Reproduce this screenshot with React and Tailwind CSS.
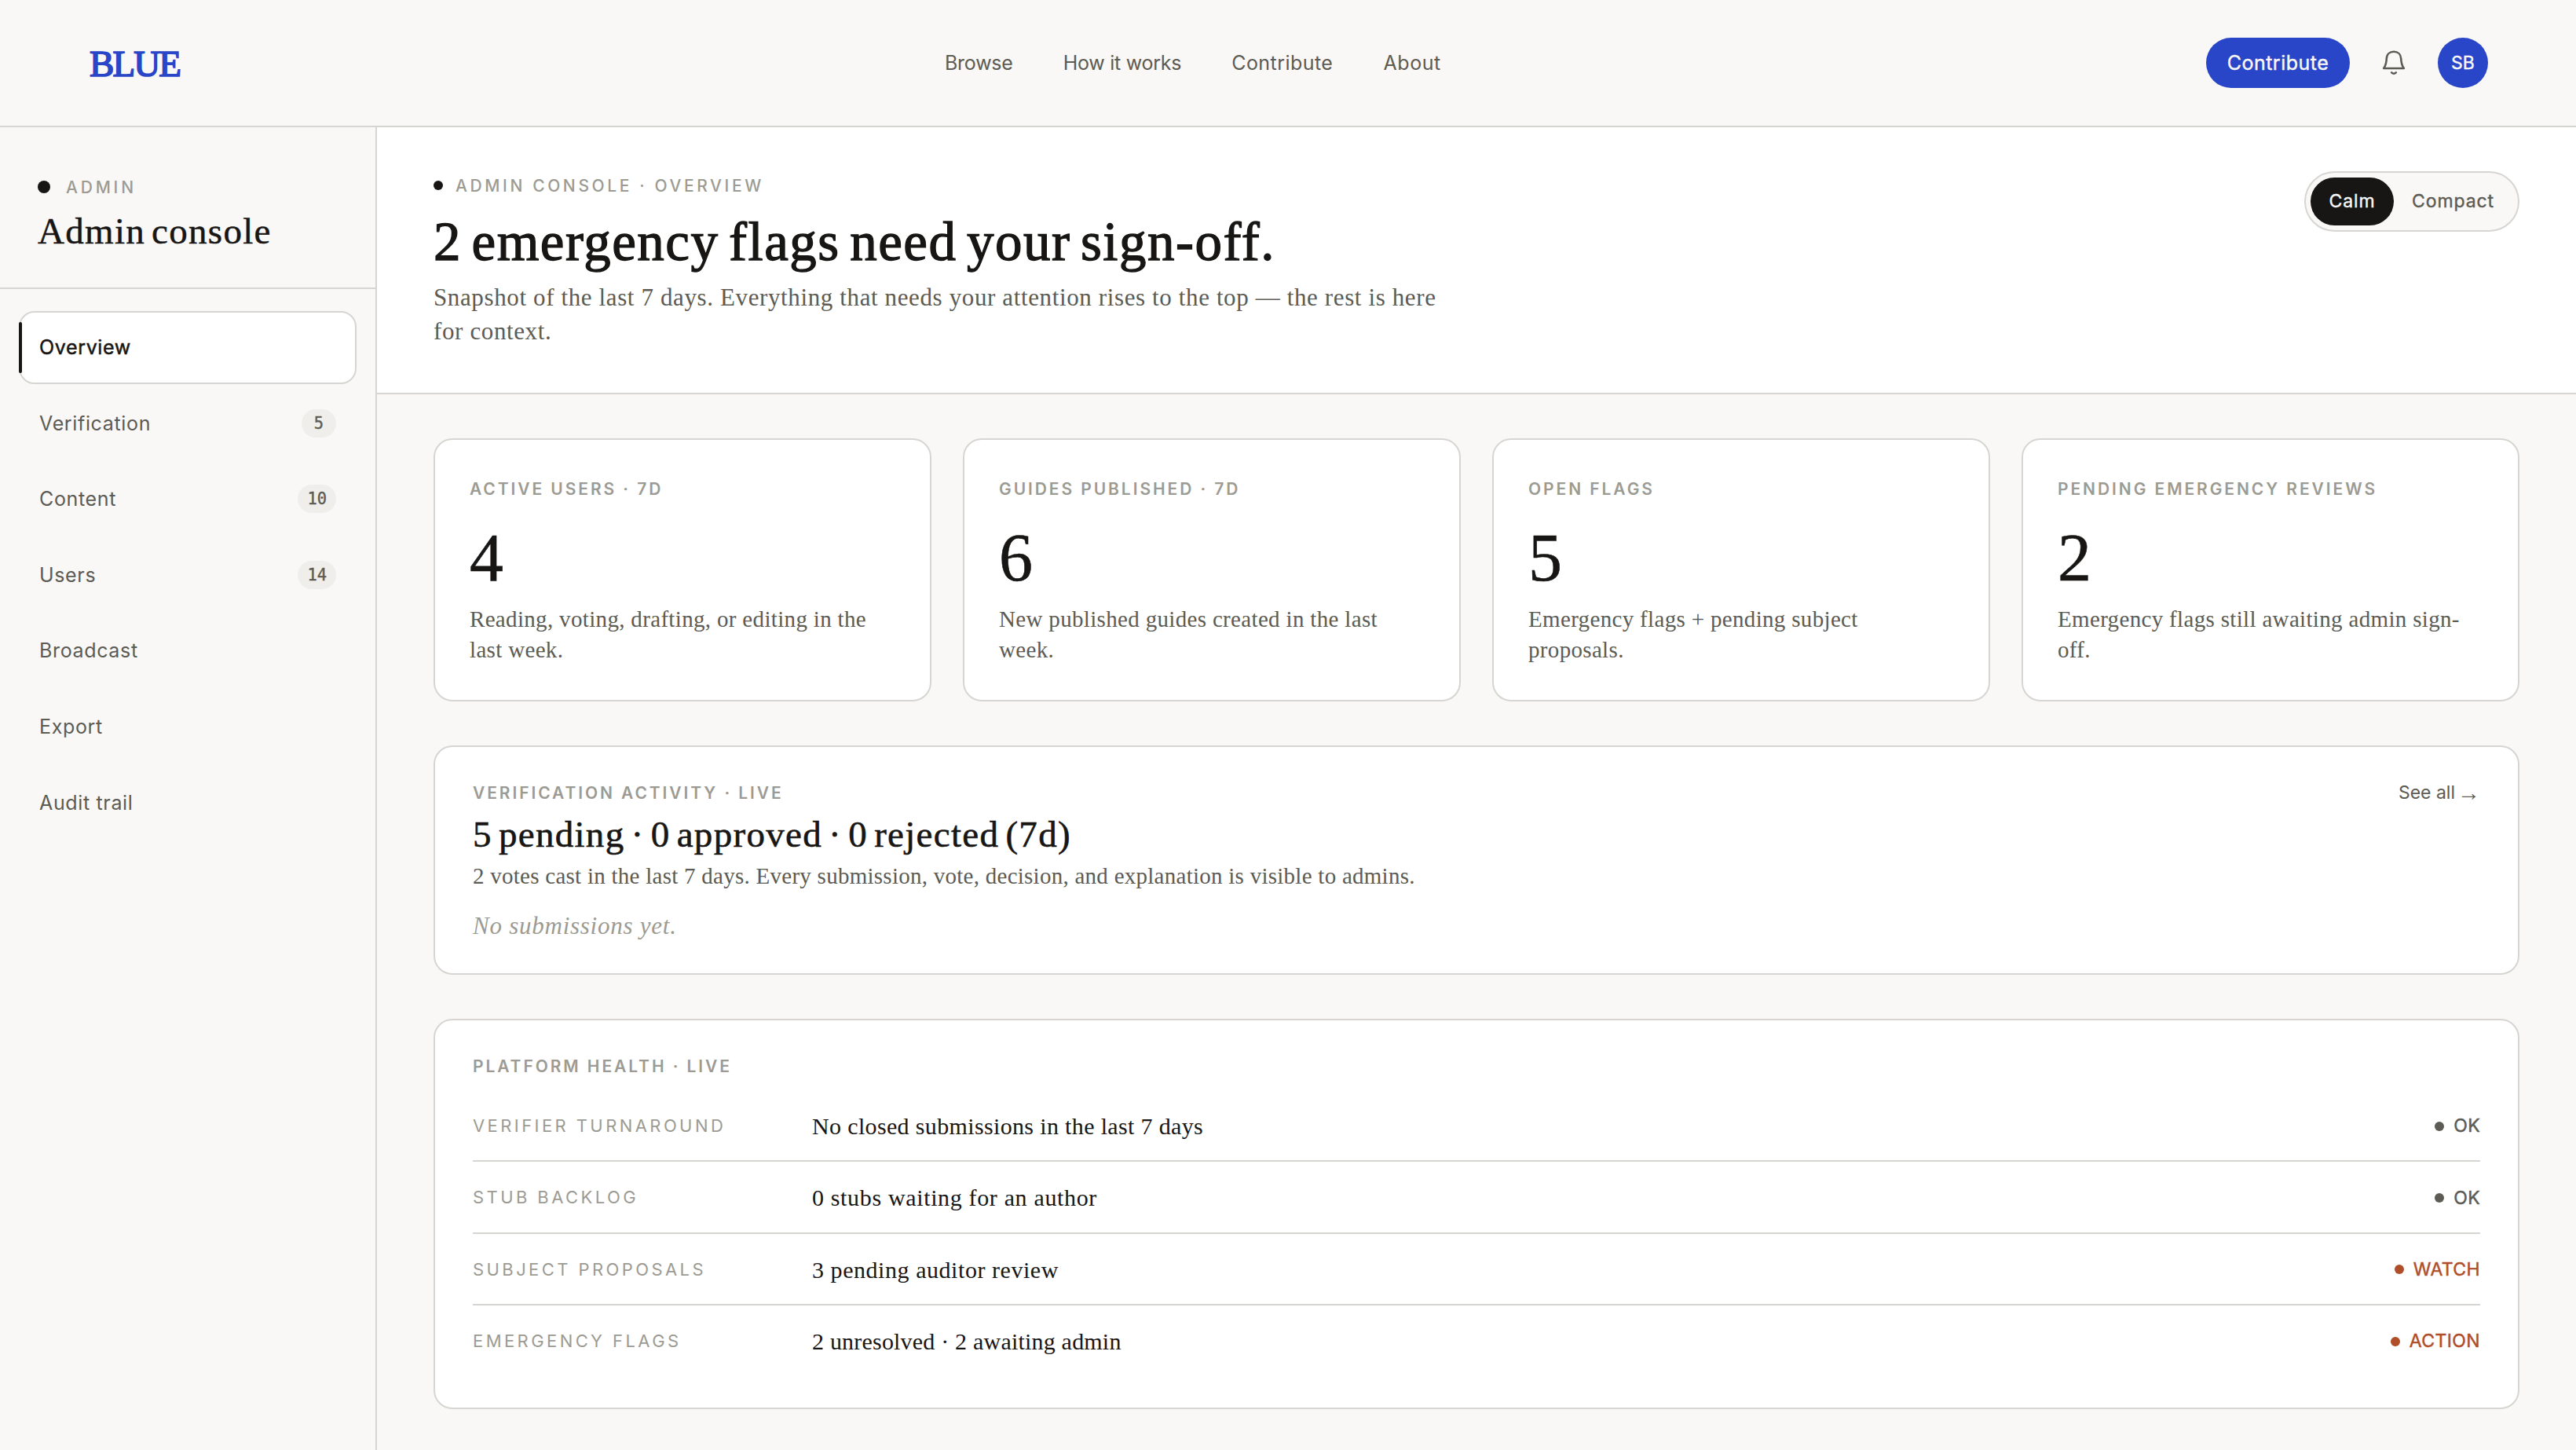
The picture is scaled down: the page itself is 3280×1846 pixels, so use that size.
import React, { useState } from 'react';
import clsx from 'clsx';

const NAV_LINKS = [
    { label: 'Browse', className: 'tracking-[-0.25px]' },
    { label: 'How it works', className: 'tracking-[-0.25px]' },
    { label: 'Contribute', className: 'tracking-[0.45px]' },
    { label: 'About', className: 'tracking-[0.6px]' }
];

const SECTIONS = [
    { id: 'overview', label: 'Overview' },
    { id: 'verification', label: 'Verification', count: 5 },
    { id: 'content', label: 'Content', count: 10 },
    { id: 'users', label: 'Users', count: 14 },
    { id: 'broadcast', label: 'Broadcast' },
    { id: 'export', label: 'Export' },
    { id: 'audit', label: 'Audit trail' }
];

const STATS = [
    { label: 'Active users · 7d', value: 4, note: 'Reading, voting, drafting, or editing in the last week.' },
    { label: 'Guides published · 7d', value: 6, note: 'New published guides created in the last week.' },
    { label: 'Open flags', value: 5, note: 'Emergency flags + pending subject proposals.' },
    { label: 'Pending emergency reviews', value: 2, note: 'Emergency flags still awaiting admin sign-off.' }
];

const HEALTH = [
    { label: 'Verifier turnaround', value: 'No closed submissions in the last 7 days', status: 'OK', className: 'tracking-[0.35px]' },
    { label: 'Stub backlog', value: '0 stubs waiting for an author', status: 'OK', className: 'tracking-[0.65px]' },
    { label: 'Subject proposals', value: '3 pending auditor review', status: 'WATCH', className: 'tracking-[0.55px]' },
    { label: 'Emergency flags', value: '2 unresolved · 2 awaiting admin', status: 'ACTION', className: 'tracking-[0.2px]' }
];

const BellIcon = () => (
    <svg viewBox="0 0 36 36" className="h-9 w-9" fill="none" stroke="currentColor" strokeWidth="2.6" strokeLinejoin="round" strokeLinecap="round">
        <path d="M5.2 25H30.8C28.4 21.5 27.4 18 27.2 12.5C27 7 23.2 3.8 18 3.8S9 7 8.8 12.5C8.6 18 7.6 21.5 5.2 25Z" />
        <path d="M15.2 30.4Q18 33.2 20.8 30.4" />
    </svg>
);

const Eyebrow = ({ children, className = 'font-semibold tracking-[2.92px]' }) => (
    <div className={clsx('pt-0.5 text-[21px] leading-[30px] uppercase text-[#9c9b93]', className)}>
        {children}
    </div>
);

const Card = ({ children, className }) => (
    <section className={clsx('rounded-[24px] border-2 border-[#d6d5d1] bg-white', className)}>{children}</section>
);

const TopBar = () => (
    <header className="flex h-[162px] items-center justify-between border-b-2 border-[#d6d5d1] px-28">
        <div className="w-[1091px] pt-px pl-0.5 font-['Liberation_Serif',serif] text-[47px] leading-[56px] tracking-[-1.9px] text-[#2945c8] [-webkit-text-stroke:1.7px_#2945c8]">BLUE</div>
        <nav className="flex flex-1 gap-16 pt-0.5 text-[25px] text-[#5c5b54]">
            {NAV_LINKS.map((link) => (
                <a key={link.label} className={link.className}>{link.label}</a>
            ))}
        </nav>
        <div className="flex items-center">
            <button className="h-16 w-[183px] rounded-full bg-[#2945c8] pt-0.5 text-[25px] tracking-[0.5px] text-[#f9f8f6] [-webkit-text-stroke:0.4px]">Contribute</button>
            <button className="mx-[38px] text-[#5c5b54]"><BellIcon /></button>
            <div className="flex h-16 w-16 items-center justify-center rounded-full bg-[#2945c8] text-[23px] text-[#f9f8f6] [-webkit-text-stroke:0.4px]">SB</div>
        </div>
    </header>
);

const Sidebar = ({ active, onSelect }) => (
    <aside className="w-[480px] shrink-0 border-r-2 border-[#d6d5d1]">
        <div className="h-[206px] border-b-2 border-[#d6d5d1] px-12 pt-[60px]">
            <div className="flex items-center gap-5">
                <span className="h-4 w-4 rounded-full bg-[#171614]" />
                <Eyebrow className="font-medium tracking-[3.8px]">Admin</Eyebrow>
            </div>
            <h2 className="mt-3 font-['Liberation_Serif',serif] text-[47px] leading-[56px] tracking-[1.3px] [word-spacing:-5px] text-[#171614] [-webkit-text-stroke:0.5px_#171614]">Admin console</h2>
        </div>
        <nav className="flex flex-col gap-1 px-6 pt-7">
            {SECTIONS.map((item) => {
                const isActive = item.id === active;
                return (
                    <button key={item.id} onClick={() => onSelect(item.id)}
                        className={clsx('relative flex h-[92.6px] items-center justify-between rounded-[20px] border-2 px-6 text-[25px] tracking-[0.65px]',
                            isActive ? 'border-[#d6d5d1] bg-white text-[#171614] [-webkit-text-stroke:0.5px]' : 'border-transparent text-[#5c5b54]')}
                    >
                        {isActive && <span className="absolute top-3 bottom-3 -left-0.5 w-1 rounded-sm bg-[#171614]" />}
                        <span className="pt-px">{item.label}</span>
                        {item.count && (
                            <span className="flex h-9 min-w-11 items-center justify-center rounded-full bg-[#efeeeb] px-3 font-['DejaVu_Sans_Mono',monospace] text-[20.4px] tracking-normal [-webkit-text-stroke:0.4px]">
                                {item.count}
                            </span>
                        )}
                    </button>
                );
            })}
        </nav>
    </aside>
);

const DensityToggle = ({ density, onChange }) => (
    <div className="flex h-[77px] w-[274px] rounded-full border-2 border-[#d6d5d1] bg-[#f9f8f6] p-1.5 text-[23px] tracking-[0.9px] [-webkit-text-stroke:0.4px]">
        <button onClick={() => onChange('calm')}
            className={clsx('w-[106px] rounded-full', density === 'calm' ? 'bg-[#171614] text-[#f9f8f6]' : 'text-[#5c5b54]')}>Calm</button>
        <button onClick={() => onChange('compact')}
            className={clsx('w-[151px] rounded-full', density === 'compact' ? 'bg-[#171614] text-[#f9f8f6]' : 'text-[#5c5b54]')}>Compact</button>
    </div>
);

const StatCard = ({ label, value, note }) => (
    <Card className="h-[335px] px-11 pt-[46px]">
        <Eyebrow>{label}</Eyebrow>
        <div className="mt-[30px] font-['Liberation_Serif',serif] text-[86px] leading-[84px] text-[#171614] [-webkit-text-stroke:0.6px_#171614]">{value}</div>
        <p className="mt-[17px] font-['Liberation_Serif',serif] text-[29px] leading-[39.3px] tracking-[0.33px] text-[#5c5b54]">{note}</p>
    </Card>
);

const HealthRow = ({ label, value, status, className }) => (
    <div className="flex h-[91.3px] items-center border-b-2 border-[#d6d5d1] pt-0.5 last:h-[89.3px] last:border-b-0">
        <div className="w-[432px] text-[22px] tracking-[3.42px] text-[#9c9b93] uppercase">{label}</div>
        <div className={clsx("flex-1 font-['Liberation_Serif',serif] text-[30px] text-[#171614]", className)}>{value}</div>
        <div className={clsx('flex items-center gap-3 text-[23px] tracking-[0.4px] [-webkit-text-stroke:0.5px]', status === 'OK' ? 'text-[#5c5b54]' : 'text-[#b04e2a]')}>
            <span className="h-3 w-3 rounded-full bg-current" />
            {status}
        </div>
    </div>
);

export default function App() {
    const [section, setSection] = useState('overview');
    const [density, setDensity] = useState('calm');

    return (
        <div className="flex h-[1846px] w-[3280px] flex-col overflow-hidden bg-[#f9f8f6] font-['Inter',sans-serif]">
            <TopBar />
            <div className="flex flex-1">
                <Sidebar active={section} onSelect={setSection} />

                <main className="flex-1">
                    {/* Page header */}
                    <div className="flex h-[340px] items-start justify-between border-b-2 border-[#d6d5d1] bg-white px-[72px] pt-14">
                        <div className="pt-0.5">
                            <div className="flex items-center gap-4">
                                <span className="h-3 w-3 rounded-full bg-[#171614]" />
                                <Eyebrow className="font-medium tracking-[3.62px]">Admin console · Overview</Eyebrow>
                            </div>
                            <h1 className="mt-4 font-['Liberation_Serif',serif] text-[69px] leading-[80px] tracking-[1.5px] [word-spacing:-6.2px] text-[#171614] [-webkit-text-stroke:1.3px_#171614]">
                                2 emergency flags need your sign-off.
                            </h1>
                            <p className="mt-[9px] w-[1300px] font-['Liberation_Serif',serif] text-[31px] leading-[43px] tracking-[0.62px] text-[#5c5b54]">
                                Snapshot of the last 7 days. Everything that needs your attention rises to the top — the rest is here<br />for context.
                            </p>
                        </div>
                        <DensityToggle density={density} onChange={setDensity} />
                    </div>

                    <div className="flex flex-col gap-14 px-[72px] pt-14">
                        <div className="grid grid-cols-4 gap-10">
                            {STATS.map((stat) => <StatCard key={stat.label} {...stat} />)}
                        </div>

                        {/* Verification activity */}
                        <Card className="flex h-[292px] items-start justify-between px-12 pt-[42px]">
                            <div>
                                <Eyebrow>Verification activity · Live</Eyebrow>
                                <h3 className="mt-[9px] font-['Liberation_Serif',serif] text-[47px] leading-[56px] tracking-[1.3px] [word-spacing:-4.9px] text-[#171614] [-webkit-text-stroke:0.6px_#171614]">
                                    5 pending · 0 approved · 0 rejected (7d)
                                </h3>
                                <p className="mt-[5px] font-['Liberation_Serif',serif] text-[29px] leading-[40px] tracking-[0.26px] text-[#5c5b54]">
                                    2 votes cast in the last 7 days. Every submission, vote, decision, and explanation is visible to admins.
                                </p>
                                <p className="mt-[22px] font-['Liberation_Serif',serif] text-[31px] leading-[44px] tracking-[0.75px] text-[#9c9b93] italic">No submissions yet.</p>
                            </div>
                            <a className="flex h-8 items-center gap-[3px] text-[23px] leading-[32px] text-[#5c5b54]">
                                See all <span className="font-['Liberation_Serif',serif] text-[29px]">→</span>
                            </a>
                        </Card>

                        {/* Platform health */}
                        <Card className="h-[497px] px-12 pt-[42px]">
                            <Eyebrow>Platform health · Live</Eyebrow>
                            <div className="mt-[15px]">
                                {HEALTH.map((row) => <HealthRow key={row.label} {...row} />)}
                            </div>
                        </Card>
                    </div>
                </main>
            </div>
        </div>
    );
}
